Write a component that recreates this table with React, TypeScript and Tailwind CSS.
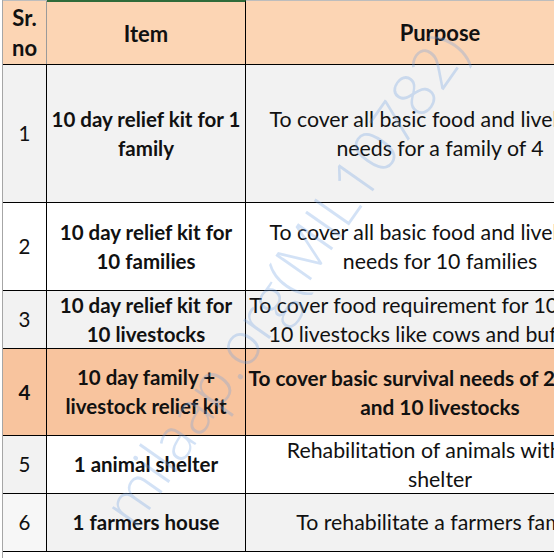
import React from "react";

type Cell = { text: React.ReactNode; bg: string; bold?: boolean };
type Row = { h: string; cells: [Cell, Cell, Cell] };

const G = "bg-[#f2f2f2]";
const W = "bg-white";
const O = "bg-[#f8c49e]";

const rows: Row[] = [
  {
    h: "h-[138px]",
    cells: [
      { text: "1", bg: G },
      { text: <>10 day relief kit for 1<br />family</>, bg: G, bold: true },
      { text: <>To cover all basic food and livelihood<br />needs for a family of 4</>, bg: G },
    ],
  },
  {
    h: "h-[88px]",
    cells: [
      { text: "2", bg: W },
      { text: <>10 day relief kit for<br />10 families</>, bg: W, bold: true },
      { text: <>To cover all basic food and livelihood<br />needs for 10 families</>, bg: W },
    ],
  },
  {
    h: "h-[58px]",
    cells: [
      { text: "3", bg: G },
      { text: <>10 day relief kit for<br />10 livestocks</>, bg: G, bold: true },
      { text: <>To cover food requirement for 10 days of<br />10 livestocks like cows and buffaloes</>, bg: G },
    ],
  },
  {
    h: "h-[87px]",
    cells: [
      { text: "4", bg: O, bold: true },
      { text: <>10 day family +<br />livestock relief kit</>, bg: O, bold: true },
      { text: <>To cover basic survival needs of 2 families<br />and 10 livestocks</>, bg: O, bold: true },
    ],
  },
  {
    h: "h-[58px]",
    cells: [
      { text: "5", bg: G },
      { text: "1 animal shelter", bg: W, bold: true },
      { text: <>Rehabilitation of animals without<br />shelter</>, bg: W },
    ],
  },
  {
    h: "h-[58px]",
    cells: [
      { text: "6", bg: "bg-[#f7f7f7]" },
      { text: "1 farmers house", bg: G, bold: true },
      { text: "To rehabilitate a farmers family", bg: G },
    ],
  },
];

export default function App() {
  return (
    <div
      className="relative w-[554px] h-[558px] overflow-hidden bg-white text-[#111]"
      style={{ fontFamily: "Lato, 'Open Sans', sans-serif" }}
    >
      <div className="ml-[2px] border-l border-[#a6a6a6] w-[640px] h-[558px] text-[20.5px] leading-[29px]">
        {/* header */}
        <div className="flex h-[65px] border-t border-b border-t-[#bdbdbd] border-b-black bg-[#fcd5b4] font-bold text-[22px]">
          <div className="w-[44px] shrink-0 border-r border-[#9a9a9a] flex items-center justify-center text-center leading-[30px]">
            Sr.<br />no
          </div>
          <div className="w-[199px] shrink-0 border-r border-black border-t-2 border-t-[#2e6b3a] -mt-px flex items-center justify-center">
            Item
          </div>
          <div className="w-[388px] shrink-0 flex items-center justify-center">
            Purpose
          </div>
        </div>
        {rows.map((r, i) => (
          <div key={i} className={`flex ${r.h} border-b border-black`}>
            <div
              className={`w-[44px] shrink-0 border-r border-black flex items-center justify-center ${r.cells[0].bg} ${r.cells[0].bold ? "font-bold" : ""}`}
            >
              {r.cells[0].text}
            </div>
            <div
              className={`w-[199px] shrink-0 border-r border-black flex items-center justify-center text-center whitespace-nowrap ${r.cells[1].bg} ${r.cells[1].bold ? "font-bold" : ""}`}
            >
              <span>{r.cells[1].text}</span>
            </div>
            <div
              className={`w-[388px] shrink-0 flex items-center justify-center text-center whitespace-nowrap ${r.cells[2].bg} ${r.cells[2].bold ? "font-bold text-[20.8px]" : "text-[21.3px]"}`}
            >
              <span>{r.cells[2].text}</span>
            </div>
          </div>
        ))}
      </div>
      {/* watermark */}
      <div className="pointer-events-none absolute left-[284px] top-[278px] w-0 h-0">
        <div
          className="absolute left-0 top-0 -translate-x-1/2 -translate-y-1/2 -rotate-[55deg] whitespace-nowrap text-[60px] font-light text-[rgba(110,160,225,0.3)]"
          style={{ fontFamily: "'Open Sans', sans-serif" }}
        >
          milaap.org(MIL10782)
        </div>
      </div>
    </div>
  );
}
